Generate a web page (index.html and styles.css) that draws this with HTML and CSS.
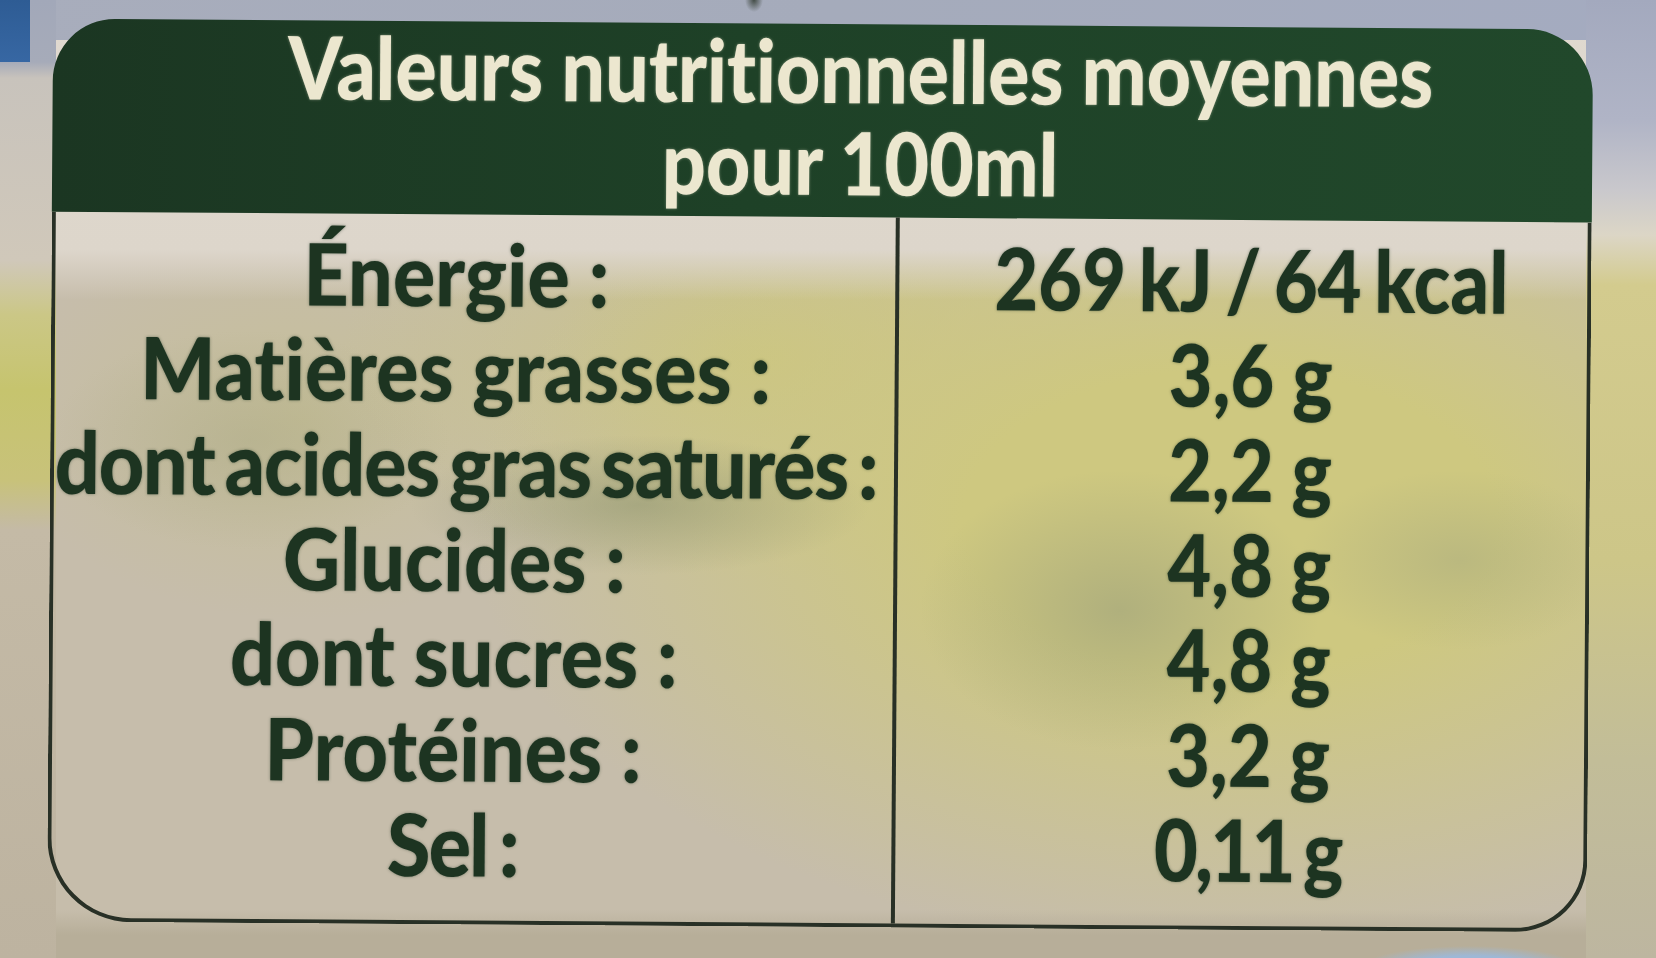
FILE: index.html
```html
<!DOCTYPE html>
<html lang="fr">
<head>
<meta charset="utf-8">
<title>Valeurs nutritionnelles moyennes</title>
<link rel="stylesheet" href="styles.css">
</head>
<body>
<div class="photo">
  <div class="label">
    <div class="head">
      <div class="head-text">
        <p>Valeurs nutritionnelles moyennes</p>
        <p>pour 100ml</p>
      </div>
    </div>
    <div class="table">
      <div class="col names">
        <div class="col-text">
          <p>Énergie :</p>
          <p>Matières grasses :</p>
          <p class="tight">dont acides gras saturés :</p>
          <p>Glucides :</p>
          <p>dont sucres :</p>
          <p>Protéines :</p>
          <p class="salt">Sel :</p>
        </div>
      </div>
      <div class="col values">
        <div class="col-text">
          <p class="energy">269 kJ / 64 kcal</p>
          <p>3,6 g</p>
          <p>2,2 g</p>
          <p>4,8 g</p>
          <p>4,8 g</p>
          <p>3,2 g</p>
          <p class="salt">0,11 g</p>
        </div>
      </div>
    </div>
  </div>
</div>
</body>
</html>
```

FILE: styles.css
```css
* { box-sizing: border-box; }

html, body {
  margin: 0;
  padding: 0;
}

body {
  width: 1656px;
  height: 958px;
  overflow: hidden;
  font-family: "Lato", "Open Sans", "DejaVu Sans", sans-serif;
  font-variant-ligatures: none;
  font-feature-settings: "liga" 0, "clig" 0;
}

.photo {
  width: 1656px;
  height: 958px;
  padding: 24px 0 0 50px;
  overflow: hidden;
  background-color: #c6bdab;
  background-image:
    /* dark speck at the very top */
    radial-gradient(ellipse 9px 12px at 754px 0px, rgba(50,60,50,.85), rgba(50,60,50,0)),
    /* blue block top-left */
    linear-gradient(180deg, #2e5c94, #3767a3),
    /* left strip */
    linear-gradient(180deg, #a2a8b9 0, #a6abb9 62px, #c8c3bc 78px, #d0c8ba 260px, #cbc786 315px, #c6c46e 390px, #c8c27a 480px, #c4baa6 530px, #bdb3a0 958px),
    /* right strip */
    linear-gradient(180deg, #a3a9be 0, #b0b4c6 120px, #c9c8cc 190px, #dcd6c6 235px, #d3cb8e 285px, #cdc688 560px, #c2bd98 760px, #bdb6a0 958px),
    /* blue patch bottom right */
    radial-gradient(ellipse 110px 22px at 1470px 968px, #9eb8d6 55%, rgba(158,184,214,0)),
    /* bottom band */
    linear-gradient(180deg, rgba(183,174,153,0) 0, rgba(183,174,153,0) 910px, #b7ae99 935px),
    /* top band */
    linear-gradient(90deg, #a8adbc, #a5abbb 50%, #a4abc0),
    /* pale strip under header */
    linear-gradient(180deg, #e0d9d0 0, #ddd6cb 250px, rgba(221,214,203,0) 300px),
    /* mottled grey-green patches */
    radial-gradient(ellipse 230px 70px at 640px 505px, rgba(140,146,112,.55), rgba(140,146,112,0)),
    radial-gradient(ellipse 200px 140px at 1120px 610px, rgba(146,152,122,.5), rgba(146,152,122,0)),
    radial-gradient(ellipse 160px 90px at 1460px 560px, rgba(150,156,126,.35), rgba(150,156,126,0)),
    radial-gradient(ellipse 200px 110px at 250px 440px, rgba(160,160,125,.35), rgba(160,160,125,0)),
    /* yellow-green areas */
    radial-gradient(ellipse 760px 430px at 1230px 520px, rgba(206,200,128,1) 35%, rgba(206,200,128,0) 100%),
    radial-gradient(ellipse 420px 220px at 760px 360px, rgba(203,197,128,.9), rgba(203,197,128,0)),
    radial-gradient(ellipse 300px 200px at 300px 420px, rgba(198,192,140,.6), rgba(198,192,140,0));
  background-size:
    auto,
    30px 62px,
    56px 958px,
    70px 958px,
    auto,
    auto,
    100% 40px,
    auto, auto, auto, auto, auto, auto, auto, auto;
  background-position:
    0 0,
    0 0,
    0 0,
    1586px 0,
    0 0, 0 0, 0 0, 0 0, 0 0, 0 0, 0 0, 0 0, 0 0, 0 0, 0 0;
  background-repeat: no-repeat;
}

.label {
  width: 1540px;
  transform: rotate(0.4deg);
}

p {
  margin: 0;
  white-space: nowrap;
}

/* ---------- header ---------- */
.head {
  height: 193px;
  padding: 0 0 0 76px;
  border-radius: 62px 66px 0 0;
  background: linear-gradient(90deg, #1b3622 0%, #1e4127 45%, #21482b 100%);
  color: #ece7cf;
  text-align: center;
  font-weight: 900;
  font-size: 87px;
  line-height: 92px;
  text-shadow: 0 0 3px rgba(236,231,207,.45);
}

.head-text {
  transform: scaleX(0.885);
  transform-origin: 50% 50%;
}

/* ---------- table ---------- */
.table {
  display: grid;
  grid-template-columns: 840px 1fr;
  border: 4px solid #283026;
  border-top: 0;
  border-radius: 0 0 72px 84px;
  padding: 11px 0 30px;
  color: #1d3421;
  font-weight: 900;
  font-size: 86px;
  line-height: 95px;
  text-align: center;
  text-shadow: 0 0 3px rgba(29,52,33,.5);
}

.names {
  padding-right: 38px;
}

.values {
  border-left: 4px solid #283026;
  margin: -11px 0 -30px;
  padding: 11px 0 30px 16px;
}

.names .col-text {
  transform: scaleX(0.92);
  transform-origin: 50% 50%;
}

.values .col-text {
  transform: scaleX(0.88);
  transform-origin: 50% 50%;
}

.tight {
  margin: 0 -100px 0 -76px;
  letter-spacing: -1.4px;
  word-spacing: -8px;
}

.names .salt {
  letter-spacing: -2px;
  word-spacing: -6px;
}

.values .salt {
  letter-spacing: -3px;
  word-spacing: -6px;
}

.energy {
  word-spacing: -6px;
}
```
